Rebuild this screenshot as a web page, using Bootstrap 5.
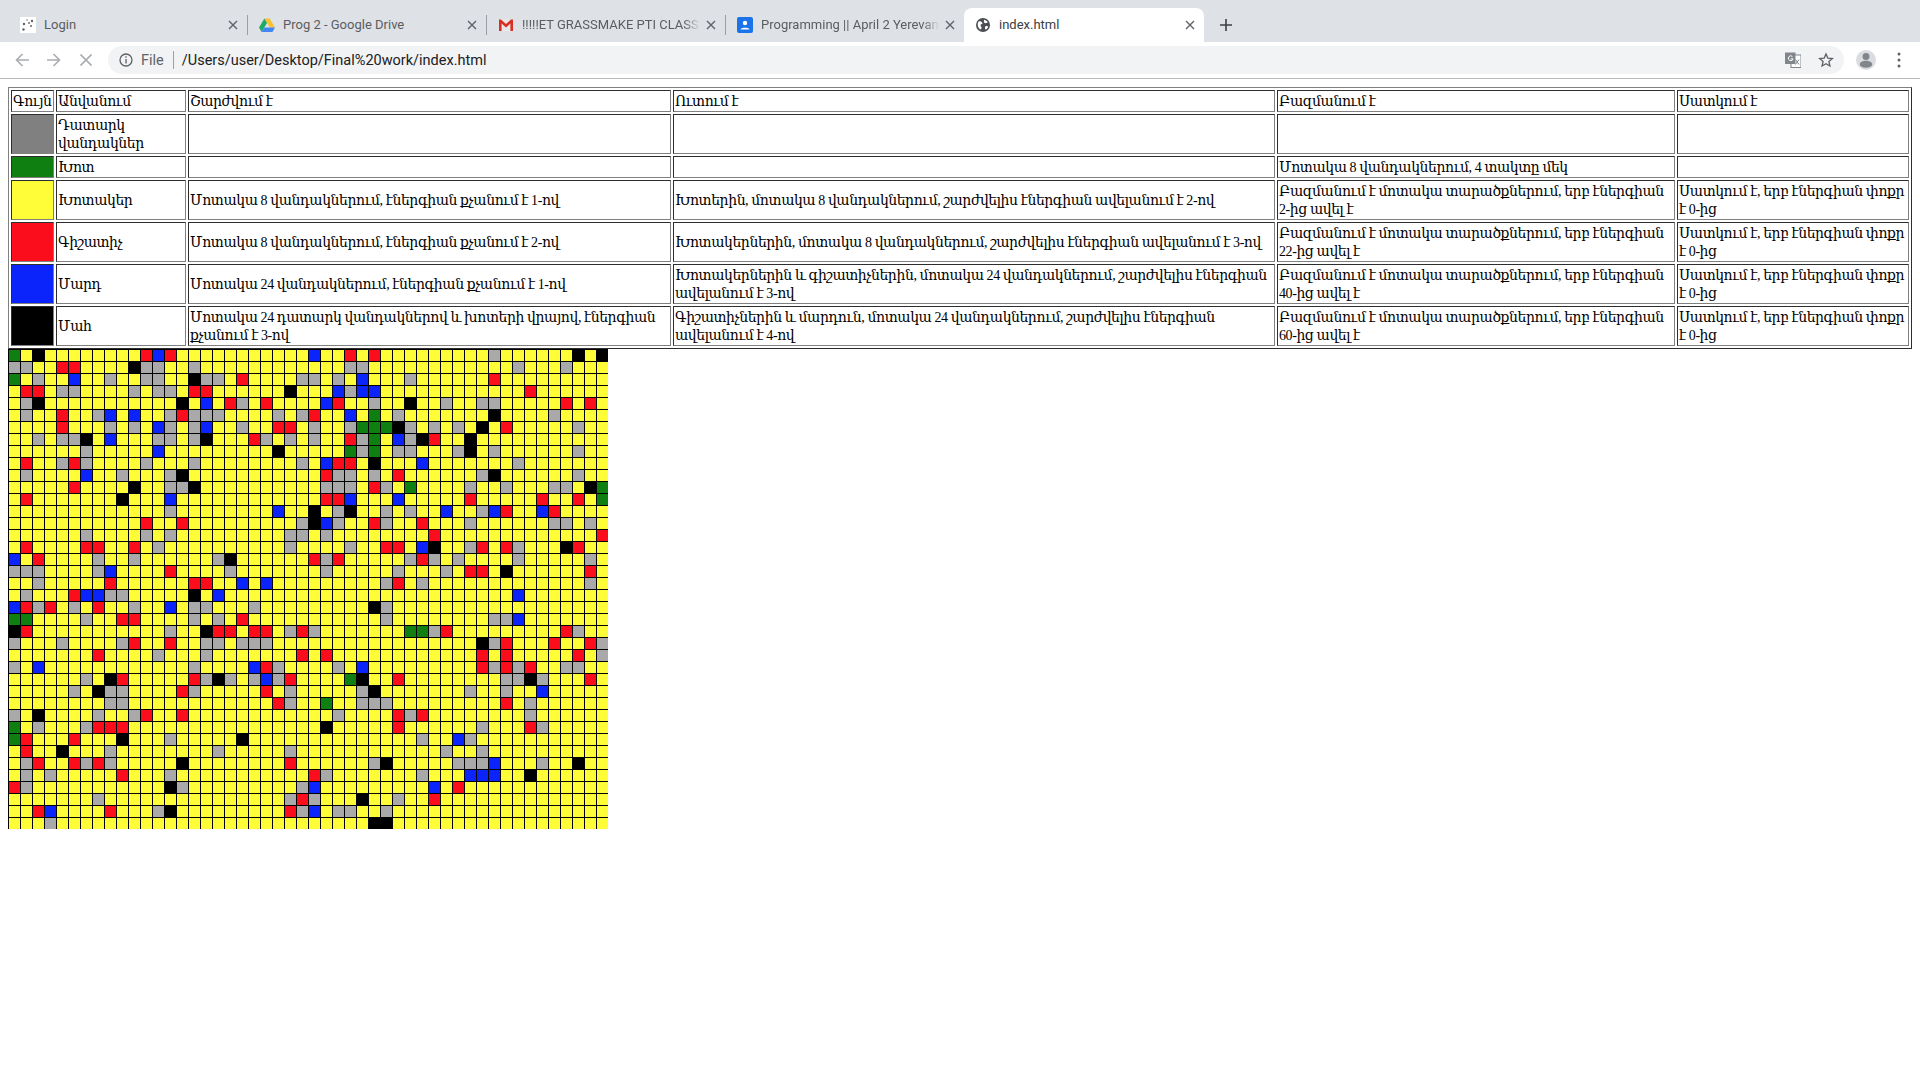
<!DOCTYPE html>
<html lang="hy">
<head>
  <meta charset="UTF-8"/>
  <meta name="viewport" content="width=device-width, initial-scale=1.0"/>
  <title>index.html</title>
  <link href="https://cdn.jsdelivr.net/npm/bootstrap@5.3.3/dist/css/bootstrap.min.css" rel="stylesheet"/>
  <style>
    html, body { height: 100%; }
    body { background: #fff; color: #000; font-family: "Liberation Serif", "DejaVu Serif", serif; font-size: 14px; line-height: 18px; letter-spacing: -0.42px; overflow: hidden; }

    /* browser chrome */
    .tabstrip { height: 42px; background: #dee1e6; padding: 8px 0 0 8px; font: 13px/34px Roboto, sans-serif; letter-spacing: 0; color: #5a5d61; }
    .tabitem { width: 239px; height: 34px; padding: 0 9px 0 12px; position: relative; white-space: nowrap; }
    .tabitem + .tabitem::before { content: ""; position: absolute; left: 0; top: 7px; height: 20px; width: 1px; background: #9aa0a6; }
    .tabitem.active-tab { width: 240px; background: #fff; border-radius: 8px 8px 0 0; color: #3c4043; }
    .tabitem.active-tab::before { display: none; }
    .tablabel { overflow: hidden; margin-left: 8px; flex: 1 1 0; min-width: 0; }
    .active-tab .tablabel { margin-left: 9px; }
    .tabfade { -webkit-mask-image: linear-gradient(to right, #000 88%, transparent 97%); mask-image: linear-gradient(to right, #000 88%, transparent 97%); }
    .toolbar { height: 37px; background: #fff; border-bottom: 1px solid #b9babb; padding: 4px 0; letter-spacing: 0; }
    .navbtn { width: 32px; height: 28px; }
    .navgroup { padding-left: 6px; width: 108px; }
    .omnibox { width: 1736px; height: 28px; border-radius: 14px; background: #f1f3f4; padding: 0 10px 0 11px; font: 14.5px/28px Roboto, sans-serif; color: #202124; }
    .omnitext { padding-top: 1px; }
    .filelabel { color: #5f6368; margin-left: 8px; }
    .omnisep { width: 1px; height: 18px; background: #9aa0a6; margin: 0 8px 0 9px; }
    .omniright { margin-left: auto; gap: 17px; }
    .avatar { margin-left: 12px; }
    .dotsicon { margin-left: 21px; }

    /* the legend table, old style border="1" */
    .pagewrap { padding: 8px; }
    .legend-table { border-collapse: separate; border-spacing: 2px; width: 1904px; table-layout: fixed; border: 1px solid; border-color: #808080 #2e2e2e #2e2e2e #808080; margin: 0; }
    .legend-table td { border: 1px solid; border-color: #2e2e2e #808080 #808080 #2e2e2e; padding: 2px 1px 0; vertical-align: middle; overflow: hidden; }
    .w-swatch { width: 43px; }
    .w-name { width: 130px; }
    .w-move { width: 483px; }
    .w-eat { width: 602px; }
    .w-breed { width: 398px; }
    .w-die { width: 232px; }
    .c-gray { background: #808080; }
    .c-green { background: #0f7f12; }
    .c-yellow { background: #fffd38; }
    .c-red { background: #fc0d1b; }
    .c-blue { background: #0b24fb; }
    .c-black { background: #000; }
    #world { display: block; }
  </style>
</head>
<body>
  <!-- tabs -->
  <div class="tabstrip d-flex">
    <div class="tabitem d-flex align-items-center">
      <svg width="16" height="16" viewBox="0 0 16 16"><rect width="16" height="16" fill="#fff"/><g fill="#5f6368"><circle cx="4" cy="7" r="1.2"/><circle cx="12" cy="4" r="1.2"/><circle cx="9" cy="6" r=".9"/><circle cx="3.500" cy="12.500" r="1.2"/><circle cx="11" cy="9" r="1"/><circle cx="7" cy="3" r=".7"/></g></svg>
      <span class="tablabel">Login</span>
      <svg width="10" height="10" viewBox="0 0 10 10" stroke="#5f6368" stroke-width="1.4"><path d="M1 1l8 8M9 1l-8 8"/></svg>
    </div>
    <div class="tabitem d-flex align-items-center">
      <svg width="16" height="16" viewBox="0 0 16 16"><path d="M5.400 1.500h5.200L16 10.600h-5.200z" fill="#fbc02d"/><path d="M5.400 1.500L0 10.600l2.600 4.400L8 5.900z" fill="#1faa63"/><path d="M5.400 10.600H16L13.400 15H2.600z" fill="#4285f4"/></svg>
      <span class="tablabel">Prog 2 - Google Drive</span>
      <svg width="10" height="10" viewBox="0 0 10 10" stroke="#5f6368" stroke-width="1.4"><path d="M1 1l8 8M9 1l-8 8"/></svg>
    </div>
    <div class="tabitem d-flex align-items-center">
      <svg width="16" height="16" viewBox="0 0 16 16"><path d="M1 2.500h14V14H1z" fill="#e8e8e8"/><path d="M1 14V2.500h2L8 7l5-4.500h2V14h-2.600V6.600L8 10.400 3.600 6.600V14z" fill="#d93025"/></svg>
      <span class="tablabel tabfade">!!!!!ET GRASSMAKE PTI CLASS</span>
      <svg width="10" height="10" viewBox="0 0 10 10" stroke="#5f6368" stroke-width="1.4"><path d="M1 1l8 8M9 1l-8 8"/></svg>
    </div>
    <div class="tabitem d-flex align-items-center">
      <svg width="16" height="16" viewBox="0 0 16 16"><rect width="16" height="16" rx="2" fill="#1a73e8"/><circle cx="8" cy="6" r="2.200" fill="#fff"/><path d="M3.500 12.500c0-2.400 9-2.400 9 0z" fill="#fff"/></svg>
      <span class="tablabel tabfade">Programming || April 2 Yerevan</span>
      <svg width="10" height="10" viewBox="0 0 10 10" stroke="#5f6368" stroke-width="1.4"><path d="M1 1l8 8M9 1l-8 8"/></svg>
    </div>
    <div class="tabitem active-tab d-flex align-items-center">
      <svg width="14" height="14" viewBox="0 0 16 16"><circle cx="8" cy="8" r="8" fill="#4b4e52"/><path d="M3 4c2-1 3 0 4 1s0 2-1 2-1 2 0 3 0 3-1 3-3-3-3-5 0-3 1-4zM10 2c1 1 2 1 3 2s-1 2-2 2-2-1-2-2 0-2 1-2zM11 9c1 0 2 0 3 1-1 2-2 3-3 3s-1-3 0-4z" fill="#fff"/></svg>
      <span class="tablabel">index.html</span>
      <svg width="10" height="10" viewBox="0 0 10 10" stroke="#5f6368" stroke-width="1.4"><path d="M1 1l8 8M9 1l-8 8"/></svg>
    </div>
    <div class="d-flex align-items-center ms-3">
      <svg width="12" height="12" viewBox="0 0 12 12" stroke="#3c4043" stroke-width="1.6"><path d="M6 0v12M0 6h12"/></svg>
    </div>
  </div>

  <!-- address bar -->
  <div class="toolbar d-flex align-items-center">
    <div class="navgroup d-flex">
      <div class="navbtn d-flex align-items-center justify-content-center"><svg width="14" height="14" viewBox="0 0 14 14" fill="none" stroke="#a9acb0" stroke-width="1.6"><path d="M14 7H1.500M7.500 1l-6 6 6 6"/></svg></div>
      <div class="navbtn d-flex align-items-center justify-content-center"><svg width="14" height="14" viewBox="0 0 14 14" fill="none" stroke="#a9acb0" stroke-width="1.6"><path d="M0 7h12.500M6.500 1l6 6-6 6"/></svg></div>
      <div class="navbtn d-flex align-items-center justify-content-center"><svg width="12" height="12" viewBox="0 0 12 12" fill="none" stroke="#a9acb0" stroke-width="1.6"><path d="M.5.5l11 11M11.500.5l-11 11"/></svg></div>
    </div>
    <div class="omnibox d-flex align-items-center flex-shrink-0">
      <svg width="14" height="14" viewBox="0 0 14 14" fill="none" stroke="#5f6368" stroke-width="1.3"><circle cx="7" cy="7" r="6"/><path d="M7 6v4.500M7 3.200v1.500"/></svg>
      <span class="filelabel omnitext">File</span>
      <span class="omnisep"></span>
      <span class="omnitext">/Users/user/Desktop/Final%20work/index.html</span>
      <div class="omniright d-flex align-items-center">
        <svg width="16" height="16" viewBox="0 0 16 16"><rect x="6" y="3" width="10" height="12.500" fill="#fff" stroke="#80868b"/><rect x="0" y="0.500" width="10.500" height="11.500" fill="#80868b"/><path d="M7.400 4.500a2.400 2.400 0 1 0 .7 2.400H5.600" fill="none" stroke="#fff" stroke-width="1"/><path d="M10.500 7.500l3.500 5M14 7.500l-3.500 5" stroke="#80868b" stroke-width="1"/></svg>
        <svg width="16" height="16" viewBox="0 0 24 24" fill="none" stroke="#5f6368" stroke-width="2"><path d="M12 3l2.700 6.200 6.800.6-5.100 4.500 1.500 6.700L12 17.500 6.100 21l1.500-6.700L2.500 9.800l6.800-.6z"/></svg>
      </div>
    </div>
    <svg class="avatar flex-shrink-0" width="20" height="20" viewBox="0 0 20 20"><circle cx="10" cy="10" r="10" fill="#dadce0"/><circle cx="10" cy="6.500" r="3.500" fill="#80868b"/><path d="M3.800 14.500c0-5 12.400-5 12.400 0a6.200 3.300 0 0 1-12.400 0z" fill="#80868b"/></svg>
    <svg class="dotsicon flex-shrink-0" width="4" height="16" viewBox="0 0 4 16" fill="#5f6368"><circle cx="2" cy="2" r="1.500"/><circle cx="2" cy="8" r="1.500"/><circle cx="2" cy="14" r="1.500"/></svg>
  </div>

  <div class="pagewrap">
    <table class="legend-table">
      <colgroup><col class="w-swatch"><col class="w-name"><col class="w-move"><col class="w-eat"><col class="w-breed"><col class="w-die"></colgroup>
      <tbody>
      <tr><td>Գույն</td><td>Անվանում</td><td>Շարժվում է</td><td>Ուտում է</td><td>Բազմանում է</td><td>Սատկում է</td></tr>
      <tr><td class="c-gray"></td><td>Դատարկ վանդակներ</td><td></td><td></td><td></td><td></td></tr>
      <tr><td class="c-green"></td><td>Խոտ</td><td></td><td></td><td>Մոտակա 8 վանդակներում, 4 տակտը մեկ</td><td></td></tr>
      <tr><td class="c-yellow"></td><td>Խոտակեր</td><td>Մոտակա 8 վանդակներում, էներգիան քչանում է 1-ով</td><td>Խոտերին, մոտակա 8 վանդակներում, շարժվելիս էներգիան ավելանում է 2-ով</td><td>Բազմանում է մոտակա տարածքներում, երբ էներգիան 2-ից ավել է</td><td>Սատկում է, երբ էներգիան փոքր է 0-ից</td></tr>
      <tr><td class="c-red"></td><td>Գիշատիչ</td><td>Մոտակա 8 վանդակներում, էներգիան քչանում է 2-ով</td><td>Խոտակերներին, մոտակա 8 վանդակներում, շարժվելիս էներգիան ավելանում է 3-ով</td><td>Բազմանում է մոտակա տարածքներում, երբ էներգիան 22-ից ավել է</td><td>Սատկում է, երբ էներգիան փոքր է 0-ից</td></tr>
      <tr><td class="c-blue"></td><td>Մարդ</td><td>Մոտակա 24 վանդակներում, էներգիան քչանում է 1-ով</td><td>Խոտակերներին և գիշատիչներին, մոտակա 24 վանդակներում, շարժվելիս էներգիան ավելանում է 3-ով</td><td>Բազմանում է մոտակա տարածքներում, երբ էներգիան 40-ից ավել է</td><td>Սատկում է, երբ էներգիան փոքր է 0-ից</td></tr>
      <tr><td class="c-black"></td><td>Մահ</td><td>Մոտակա 24 դատարկ վանդակներով և խոտերի վրայով, էներգիան քչանում է 3-ով</td><td>Գիշատիչներին և մարդուն, մոտակա 24 վանդակներում, շարժվելիս էներգիան ավելանում է 4-ով</td><td>Բազմանում է մոտակա տարածքներում, երբ էներգիան 60-ից ավել է</td><td>Սատկում է, երբ էներգիան փոքր է 0-ից</td></tr>
      </tbody>
    </table>
    <canvas id="world" width="600" height="480"></canvas>
  </div>

  <script>
    // non-yellow cells per row: col + type (g gray, r red, b blue, k black, G green)
    const rows = [
      "0G 2k 11r 12b 13r 25b 28r 30r 40g 47k 49k",
      "0g 1g 4r 5r 10k 11g 12g 15g 28g 29g 42g 46g",
      "0G 2g 5b 8g 11g 12g 15k 16g 17g 19r 24g 25g 27g 29b 33g 40r",
      "1r 2r 4g 5g 10g 12g 13g 15r 16r 23k 27b 28g 29b 30b 43r",
      "1g 2k 14k 16b 18r 19g 21r 26b 27r 30g 33k 36g 39g 40g 46r 48r",
      "1g 4r 7g 8b 10b 13g 14r 15g 16g 17g 22g 24g 25r 28b 30G 32g 40k 45g",
      "4r 8g 10g 12b 13g 15g 16b 19g 22r 23r 25g 28g 29G 30G 31G 32k 33g 35g 37g 39k 41r 47g",
      "2g 4g 5g 6k 8b 12g 13g 15g 16k 20r 21g 23g 25g 28r 29g 30G 32b 33g 34k 35r 38k",
      "6g 12b 22k 28G 29g 30G 32g 33g 37g 38k 40g 47g",
      "1r 4g 5r 6g 11g 15g 24g 26b 27r 28r 30k 34b 42g",
      "1g 6b 9g 13g 14k 26r 27g 28g 30g 32r 39g 40k 47g",
      "5r 10k 13g 14g 15k 26g 27g 28g 30r 31g 33G 38g 41g 45g 46g 48k 49G",
      "1r 9k 13b 26r 27r 28b 32b 38r 44r 47r 49G",
      "13g 22b 25k 27g 28k 31g 33g 36b 39g 40b 41r 44b 45r",
      "11r 14r 24g 25k 26b 27g 30r 31g 34r 38g 45g 46g 48g",
      "6g 11g 13g 23g 24g 26g 35r 49r",
      "1r 6r 7r 10r 12g 23g 28g 31r 32r 34b 35k 38g 39r 41r 42g 46k 47r",
      "0b 2r 7g 10g 17g 18k 25r 26g 27r 33g 34r 35g 37g 42g 48g",
      "0g 1g 2g 7g 8b 13r 18g 26g 32g 36g 38r 39r 41k 48r",
      "2g 8r 15r 16r 19b 21b 31g 32r 34g 48g",
      "1g 5r 6b 7b 8g 9g 15k 17b 42b",
      "0b 1r 2g 3r 5g 7r 10g 13b 15g 16g 20g 30k 31g",
      "0G 1G 6g 9r 10r 15g 17g 19r 31g 40g 41g 42b",
      "0k 1r 13g 16k 17r 18r 20r 21r 23g 24r 25g 33G 34G 35g 36r 46r 47g",
      "0g 4g 9g 10r 13r 16g 17g 19g 20g 21g 39k 40g 41r 45r 48r 49g",
      "7r 12g 16g 24r 26r 39r 41r 47r 49g",
      "0g 2b 15g 20b 21r 22g 27g 29b 39r 40g 41r 42g 43r 46g 47g",
      "6g 8k 9r 15r 16g 17k 18g 20g 21b 22g 23r 28G 29k 32r 41g 42g 43k 44g 48r",
      "5g 7k 8g 9g 14r 15g 21r 23g 29g 30k 38g 41g 44b",
      "8g 9g 22r 23g 26G 29g 30g 31g 41r 43g",
      "0g 2k 7g 10g 11r 14r 27g 32r 33g 34r 43g",
      "0G 2g 6g 7r 8r 9r 26k 32r 39g 43r 44g",
      "0G 1r 5r 9k 13g 19k 34g 37b 38g",
      "1r 4k 8g 17g 23g 36g 39g",
      "1g 2r 5r 6g 7r 8g 14k 23r 30g 31k 37g 38g 39g 40b 44g 47k",
      "1g 3g 9r 13g 25r 26g 34g 38b 39b 40b 43k",
      "0r 1g 13k 14g 24g 25b 35b 37r",
      "7g 23g 24r 25g 29k 32g 35r",
      "2r 3b 8r 12g 13k 23r 24g 25b 27g 28g 31g",
      "3g 30k 31k"
    ];
    const colors = { g: "#a9a9a9", r: "#fc0d1b", b: "#0b24fb", k: "#000000", G: "#0f7f12" };
    const ctx = document.getElementById("world").getContext("2d");
    ctx.fillStyle = "#000";
    ctx.fillRect(0, 0, 600, 480);
    for (let y = 0; y < 40; y++) {
      const cells = {};
      rows[y].split(" ").forEach(s => { cells[parseInt(s)] = s.slice(-1); });
      for (let x = 0; x < 50; x++) {
        ctx.fillStyle = cells[x] ? colors[cells[x]] : "#fffd38";
        ctx.fillRect(x * 12 + 1, y * 12 + 1, 11, 11);
      }
    }
  </script>
</body>
</html>
